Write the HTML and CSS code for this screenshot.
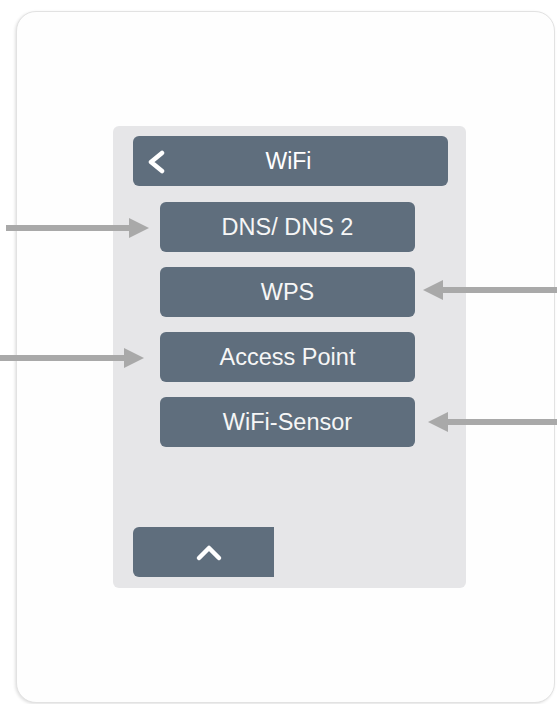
FILE: index.html
```html
<!DOCTYPE html>
<html lang="en">
<head>
  <meta charset="UTF-8" />
  <title>WiFi Menu</title>
  <link rel="stylesheet" href="styles.css">
</head>
<body>

  <div class="stage">
    <div class="card">
      <div class="panel">
        <div class="header">
          <svg class="back" width="20" height="24" viewBox="0 0 20 24">
            <polyline points="16,3 5,12 16,21" fill="none" stroke="white" stroke-width="4.5" stroke-linecap="round" stroke-linejoin="round" />
          </svg>
          <span>WiFi</span>
        </div>

        <div class="menu">
          <div class="item">DNS/ DNS 2</div>
          <div class="item">WPS</div>
          <div class="item">Access Point</div>
          <div class="item">WiFi-Sensor</div>
        </div>

        <div class="up-btn">
          <svg width="28" height="20" viewBox="0 0 28 20">
            <polyline points="4,16 14,6 24,16" fill="none" stroke="white" stroke-width="4.5" stroke-linecap="round" stroke-linejoin="round" />
          </svg>
        </div>
      </div>
    </div>

    <!-- pointer arrows over the picture -->
    <div class="arrow arrow-right" style="left: 6px; top: 218px; width: 143px;"></div>
    <div class="arrow arrow-right" style="left: 0px; top: 348px; width: 144px;"></div>
    <div class="arrow arrow-left" style="left: 423px; top: 280px; width: 134px;"></div>
    <div class="arrow arrow-left" style="left: 428px; top: 412px; width: 129px;"></div>
  </div>

</body>
</html>
```

FILE: styles.css
```css
body {
  margin: 0;
  background: #ffffff;
  font-family: "Liberation Sans", Arial, sans-serif;
}

.stage {
  position: relative;
  width: 557px;
  height: 704px;
  overflow: hidden;
  padding: 11px 0 0 16px;
  box-sizing: border-box;
}

.card {
  width: 539px;
  height: 692px;
  box-sizing: border-box;
  border: 1px solid #e2e2e2;
  border-radius: 20px;
  background: #fefefe;
  box-shadow: -1px 1px 3px rgba(0, 0, 0, 0.12);
  padding: 114px 0 0 96px;
}

.panel {
  width: 353px;
  height: 462px;
  box-sizing: border-box;
  background: #e6e6e8;
  border-radius: 6px;
  padding: 10px 18px 11px 20px;
  display: flex;
  flex-direction: column;
}

.header {
  position: relative;
  height: 50px;
  background: #5f6e7d;
  border-radius: 6px;
  color: white;
  font-size: 23px;
  display: flex;
  align-items: center;
  justify-content: center;
}

.header span {
  margin-left: -4px;
}

.back {
  position: absolute;
  left: 13px;
  top: 14px;
}

.menu {
  margin-top: 16px;
  padding-left: 27px;
  display: flex;
  flex-direction: column;
  gap: 15px;
}

.item {
  width: 255px;
  height: 50px;
  box-sizing: border-box;
  background: #5f6e7d;
  border-radius: 6px;
  color: #f6f6f6;
  font-size: 23.5px;
  display: flex;
  align-items: center;
  justify-content: center;
}

.up-btn {
  margin-top: auto;
  width: 141px;
  height: 50px;
  background: #5f6e7d;
  border-radius: 6px 0 0 6px;
  display: flex;
  align-items: center;
  justify-content: center;
}

.up-btn svg {
  margin-left: 10px;
}

.arrow {
  position: absolute;
  height: 20px;
}

.arrow::before {
  content: "";
  position: absolute;
  top: 7px;
  height: 6px;
  background: #a9a9a9;
}

.arrow::after {
  content: "";
  position: absolute;
  top: 0;
  width: 0;
  height: 0;
  border-top: 10px solid transparent;
  border-bottom: 10px solid transparent;
}

.arrow-right::before {
  left: 0;
  right: 18px;
}

.arrow-right::after {
  right: 0;
  border-left: 20px solid #a9a9a9;
}

.arrow-left::before {
  left: 18px;
  right: 0;
}

.arrow-left::after {
  left: 0;
  border-right: 20px solid #a9a9a9;
}
```
